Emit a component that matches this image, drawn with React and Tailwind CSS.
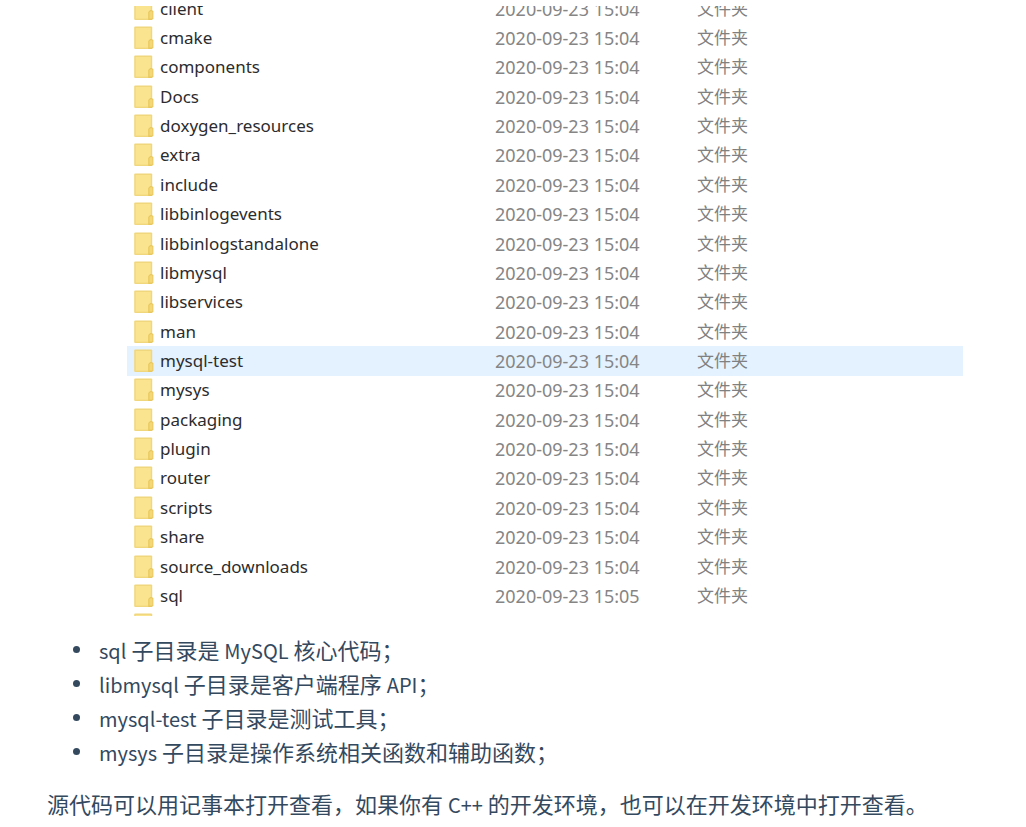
const folders = [
  { name: "client", time: "15:04" },
  { name: "cmake", time: "15:04" },
  { name: "components", time: "15:04" },
  { name: "Docs", time: "15:04" },
  { name: "doxygen_resources", time: "15:04" },
  { name: "extra", time: "15:04" },
  { name: "include", time: "15:04" },
  { name: "libbinlogevents", time: "15:04" },
  { name: "libbinlogstandalone", time: "15:04" },
  { name: "libmysql", time: "15:04" },
  { name: "libservices", time: "15:04" },
  { name: "man", time: "15:04" },
  { name: "mysql-test", time: "15:04", selected: true },
  { name: "mysys", time: "15:04" },
  { name: "packaging", time: "15:04" },
  { name: "plugin", time: "15:04" },
  { name: "router", time: "15:04" },
  { name: "scripts", time: "15:04" },
  { name: "share", time: "15:04" },
  { name: "source_downloads", time: "15:04" },
  { name: "sql", time: "15:05" },
];

function FolderIcon() {
  return (
    <svg className="h-6 w-5 shrink-0" viewBox="0 0 20 24" aria-hidden="true">
      <rect x="0.2" y="0.6" width="18" height="22.4" rx="1" fill="#f0d67c" />
      <rect x="1.6" y="2" width="15.2" height="19.6" fill="#fae48f" />
      <path d="M14.2 15 L16.2 13 H18 L19.4 14.4 V21.6 L18 23 H14.2 Z" fill="#e9c95f" />
      <path d="M15.4 15.4 L16.6 14.2 H17.6 L18.4 15 V21.4 H15.4 Z" fill="#f4d776" />
    </svg>
  );
}

function FolderRow({ folder }) {
  return (
    <tr className={folder.selected ? "bg-[#e4f2ff]" : ""}>
      <td className="p-0">
        <div className="flex items-center gap-1.5 pl-[7px] text-[#2c2c2e]">
          <FolderIcon />
          <span>{folder.name}</span>
        </div>
      </td>
      <td className="p-0 text-[18px] text-[#858585]">2020-09-23 {folder.time}</td>
      <td className="p-0 text-[#808080]">文件夹</td>
    </tr>
  );
}

// Latin words sit slightly smaller than the Chinese text around them
function En({ children }) {
  return <span className="text-[20px] leading-none">{children}</span>;
}

function Item({ children }) {
  return (
    <li className="flex items-center gap-[19px] before:size-[7px] before:shrink-0 before:rounded-full before:bg-current">
      <span>{children}</span>
    </li>
  );
}

export default function App() {
  return (
    <main className="bg-white px-[47px] pt-1.5 font-['Noto_Sans_CJK_SC',sans-serif] text-[22px] text-[#34495e]">
      <div className="mr-4 ml-20 h-[610px] overflow-hidden">
        <table className="-mt-3 h-[646px] w-full table-fixed border-collapse text-left font-['Noto_Sans','Noto_Sans_CJK_SC',sans-serif] text-[17px] leading-6">
          <colgroup>
            <col className="w-[368px]" />
            <col className="w-[202px]" />
            <col />
          </colgroup>
          <tbody>
            {folders.map((folder) => (
              <FolderRow key={folder.name} folder={folder} />
            ))}
            <tr>
              <td className="p-0" colSpan={3}>
                <div className="pl-[7px]">
                  <FolderIcon />
                </div>
              </td>
            </tr>
          </tbody>
        </table>
      </div>

      <ul className="mt-4 pl-[26px] leading-[34px]">
        <Item><En>sql</En> 子目录是 <En>MySQL</En> 核心代码；</Item>
        <Item><En>libmysql</En> 子目录是客户端程序 <En>API</En>；</Item>
        <Item><En>mysql-test</En> 子目录是测试工具；</Item>
        <Item><En>mysys</En> 子目录是操作系统相关函数和辅助函数；</Item>
      </ul>

      <p className="mt-4 leading-[38px]">
        源代码可以用记事本打开查看，如果你有 <En>C++</En> 的开发环境，也可以在开发环境中打开查看。
      </p>
    </main>
  );
}
